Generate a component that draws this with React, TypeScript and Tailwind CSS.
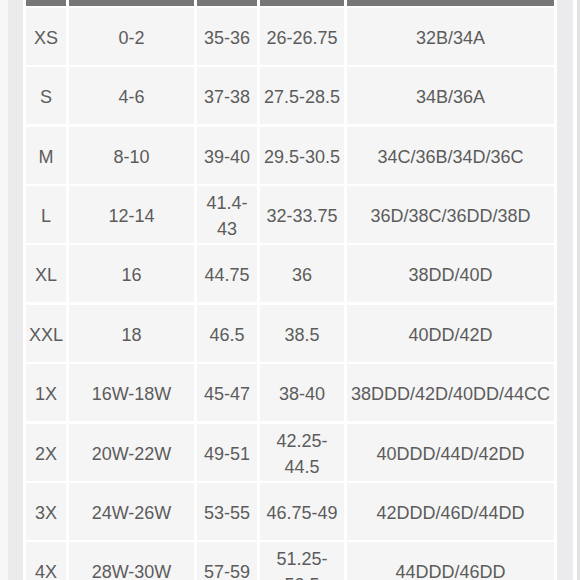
import React from 'react';

const rows: string[][] = [
  ['XS', '0-2', '35-36', '26-26.75', '32B/34A'],
  ['S', '4-6', '37-38', '27.5-28.5', '34B/36A'],
  ['M', '8-10', '39-40', '29.5-30.5', '34C/36B/34D/36C'],
  ['L', '12-14', '41.4-|43', '32-33.75', '36D/38C/36DD/38D'],
  ['XL', '16', '44.75', '36', '38DD/40D'],
  ['XXL', '18', '46.5', '38.5', '40DD/42D'],
  ['1X', '16W-18W', '45-47', '38-40', '38DDD/42D/40DD/44CC'],
  ['2X', '20W-22W', '49-51', '42.25-|44.5', '40DDD/44D/42DD'],
  ['3X', '24W-26W', '53-55', '46.75-49', '42DDD/46D/44DD'],
  ['4X', '28W-30W', '57-59', '51.25-|53.5', '44DDD/46DD'],
];

const Cell: React.FC<{ value: string }> = ({ value }) => {
  const lines = value.split('|');
  return (
    <div className="bg-[#f5f5f5] flex flex-col items-center justify-center text-center pt-[3px] leading-[26px] whitespace-nowrap">
      {lines.map((l, i) => (
        <span key={i}>{l}</span>
      ))}
    </div>
  );
};

export default function App() {
  return (
    <div
      className="w-[580px] h-[580px] overflow-hidden flex bg-white text-[18px] text-[#5c5c5c]"
      style={{ fontFamily: '"Liberation Sans", Arial, sans-serif' }}
    >
      <div className="w-[8px] shrink-0 bg-[#f7f7f7]" />
      <div className="w-[15px] shrink-0 bg-[#ebebed]" />
      <div className="w-[531px] shrink-0 bg-white pl-[3px]">
        <div className="grid grid-cols-[40px_125px_60px_84px_207px] grid-rows-[5.5px] auto-rows-[57px] gap-x-[3px] gap-y-[2.4px]">
          <div className="bg-[#777777]" />
          <div className="bg-[#777777]" />
          <div className="bg-[#777777]" />
          <div className="bg-[#777777]" />
          <div className="bg-[#777777]" />
          {rows.map((r) =>
            r.map((v, j) => <Cell key={r[0] + j} value={v} />)
          )}
        </div>
      </div>
      <div className="w-[3px] shrink-0 bg-white" />
      <div className="w-[16px] shrink-0 bg-[#ebebed]" />
      <div className="w-[4px] shrink-0 bg-white" />
      <div className="w-[3px] shrink-0 bg-[#e2e2e2]" />
    </div>
  );
}
